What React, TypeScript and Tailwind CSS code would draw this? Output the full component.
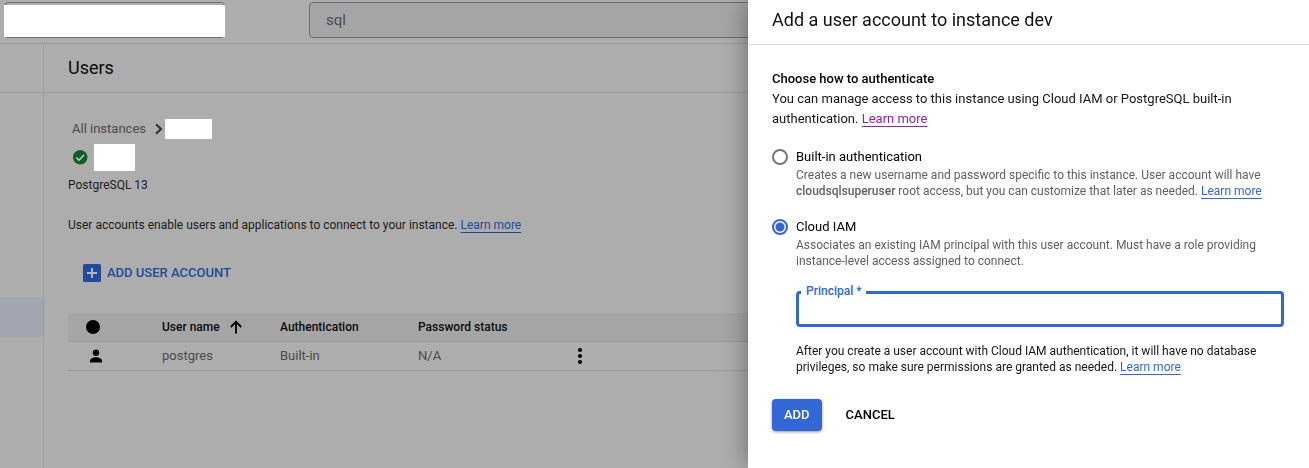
import React from "react";

function LearnMore({ visited = false, dimmed = false }: { visited?: boolean; dimmed?: boolean }) {
  const color = visited ? "text-[#8e24aa]" : dimmed ? "text-[#224a9b]" : "text-[#3367d6]";
  return (
    <a href="#" className={`${color} underline decoration-1 underline-offset-[3px]`}>
      Learn more
    </a>
  );
}

function TopBar() {
  return (
    <header className="flex h-11 items-start border-b border-[#9b9b9b] pl-1">
      <div className="mt-0.5 h-9 w-[221px] rounded border border-[#6f7174] pt-0.5">
        <div className="-mx-px h-8 bg-white" />
      </div>
      <input
        type="text"
        aria-label="Search"
        defaultValue="sql"
        className="mt-0.5 ml-[84px] h-9 grow rounded border border-[#6a6d70] bg-[#a3a5a7] px-4 text-[15px] text-[#4b4d4f] outline-none"
      />
    </header>
  );
}

function UsersTable() {
  return (
    <table className="mt-[30px] w-full table-fixed border-collapse text-left text-[13px]">
      <colgroup>
        <col className="w-[94px]" />
        <col className="w-[118px]" />
        <col className="w-[138px]" />
        <col className="w-[156px]" />
        <col />
      </colgroup>
      <thead className="bg-[#a5a5a5] text-xs text-[#0c0c0c]">
        <tr className="h-7 border-b border-[#989898]">
          <th className="pl-[18px]">
            <svg viewBox="0 0 14 14" className="size-3.5" role="img" aria-label="Type">
              <circle cx="7" cy="7" r="7" fill="#000" />
            </svg>
          </th>
          <th className="font-medium">
            <span className="flex items-center gap-2">
              User name
              <svg viewBox="0 0 16 16" className="size-4" aria-hidden="true">
                <path d="M8 14.500V3M2.800 8 8 2.800 13.200 8" fill="none" stroke="#000" strokeWidth="1.800" />
              </svg>
            </span>
          </th>
          <th className="font-medium">Authentication</th>
          <th className="font-medium">Password status</th>
          <th aria-label="Actions" />
        </tr>
      </thead>
      <tbody className="text-[#4b4b4b]">
        <tr className="h-[29px] border-b border-[#989898]">
          <td className="pl-5">
            <svg viewBox="0 0 16 16" className="size-4" role="img" aria-label="User">
              <circle cx="8" cy="4.700" r="3.200" fill="#000" />
              <path d="M2 14.500v-1.700c0-2.200 3.500-3.500 6-3.500s6 1.300 6 3.500v1.700z" fill="#000" />
            </svg>
          </td>
          <td>postgres</td>
          <td>Built-in</td>
          <td>N/A</td>
          <td>
            <button type="button" aria-label="More actions" className="flex">
              <svg viewBox="0 0 12 18" className="h-[18px] w-3" fill="#000" aria-hidden="true">
                <circle cx="6" cy="3" r="2.100" />
                <circle cx="6" cy="9" r="2.100" />
                <circle cx="6" cy="15" r="2.100" />
              </svg>
            </button>
          </td>
        </tr>
      </tbody>
    </table>
  );
}

function UsersPage() {
  return (
    <div className="flex min-h-screen flex-col bg-[#adadad]">
      <TopBar />
      <div className="flex grow">
        <nav className="flex w-11 shrink-0 flex-col border-r border-[#9b9b9b]">
          <div className="h-[49px] border-b border-[#9b9b9b]" />
          <a href="#" aria-label="Users" aria-current="page" className="mt-51 h-10 bg-[#a2a6b0]" />
        </nav>
        <main className="flex min-w-0 grow flex-col">
          <h1 className="flex h-[49px] items-center border-b border-[#9b9b9b] pl-6 text-lg text-[#0c0c0c]">
            Users
          </h1>
          <div className="flex flex-col pt-[26px] pl-6 text-[#1c1c1c]">
            <div className="flex h-5 items-center pl-1 text-[13px] text-[#4b4b4b]">
              <a href="#">All instances</a>
              <svg viewBox="0 0 8 12" className="mr-0.5 ml-[9px] h-3 w-2" aria-hidden="true">
                <path d="m1 1.200 5 4.800-5 4.800" fill="none" stroke="#333" strokeWidth="2.200" />
              </svg>
              <span className="h-5 w-[47px] bg-white" />
            </div>
            <div className="mt-[5px] flex h-[27px] items-center gap-1.5 pl-[5px]">
              <svg viewBox="0 0 15 15" className="size-[15px]" role="img" aria-label="Running">
                <circle cx="7.200" cy="7.300" r="7.200" fill="#125e26" />
                <path d="m3.300 7.500 2.700 2.700 5-5.200" fill="none" stroke="#c3cfc6" strokeWidth="1.500" />
              </svg>
              <span className="h-full w-[41px] bg-white" />
            </div>
            <p className="mt-1 text-xs leading-5">PostgreSQL 13</p>
            <p className="mt-5 text-xs leading-5">
              User accounts enable users and applications to connect to your instance.{" "}
              <LearnMore dimmed />
            </p>
            <button
              type="button"
              className="mt-7 ml-[15px] flex h-5 items-center gap-1.5 self-start text-[13px] font-medium text-[#224a9b]"
            >
              <svg viewBox="0 0 18 18" className="size-[18px]" aria-hidden="true">
                <rect width="18" height="18" rx="1.500" fill="#224a9b" />
                <path d="M9 4v10M4 9h10" stroke="#b6bac2" strokeWidth="1.800" />
              </svg>
              ADD USER ACCOUNT
            </button>
            <UsersTable />
          </div>
        </main>
      </div>
    </div>
  );
}

const radioClass =
  "mt-0.5 size-4 shrink-0 appearance-none rounded-full border-2 border-[#757575] checked:border-[#3367d6] checked:bg-[radial-gradient(circle,#3367d6_4px,#fff_5px)]";

function AddUserPanel() {
  return (
    <aside
      aria-labelledby="panel-title"
      className="fixed inset-y-0 right-0 w-[561px] overflow-hidden bg-white shadow-[0_0_24px_rgba(0,0,0,0.4)]"
    >
      <h2
        id="panel-title"
        className="flex h-[45px] items-center border-b border-[#e0e0e0] px-6 pb-1 text-lg text-[#111]"
      >
        Add a user account to instance dev
      </h2>
      <form className="flex flex-col px-6 pt-6 text-xs text-[#161616]">
        <h3 className="text-[13px] leading-5 font-medium text-black">Choose how to authenticate</h3>
        <p className="text-[13px] leading-5">
          You can manage access to this instance using Cloud IAM or PostgreSQL built-in
          <br />
          authentication. <LearnMore visited />
        </p>
        <div className="mt-[18px] flex gap-2">
          <input id="builtin" type="radio" name="method" className={radioClass} aria-describedby="builtin-help" />
          <div>
            <label htmlFor="builtin" className="block text-[13px] leading-5 text-black">
              Built-in authentication
            </label>
            <p id="builtin-help" className="leading-4 text-[#616161]">
              Creates a new username and password specific to this instance. User account will have
              <br />
              <b className="font-medium">cloudsqlsuperuser</b> root access, but you can customize that later as needed.{" "}
              <LearnMore />
            </p>
          </div>
        </div>
        <div className="mt-[18px] flex gap-2">
          <input
            id="iam"
            type="radio"
            name="method"
            defaultChecked
            className={radioClass}
            aria-describedby="iam-help"
          />
          <div className="grow">
            <label htmlFor="iam" className="block text-[13px] leading-5 text-black">
              Cloud IAM
            </label>
            <p id="iam-help" className="leading-4 text-[#616161]">
              Associates an existing IAM principal with this user account. Must have a role providing
              <br />
              instance-level access assigned to connect.
            </p>
            <div className="relative mt-[22px] mr-px">
              <label
                htmlFor="principal"
                className="absolute -top-2 left-[5px] bg-white pr-1 pl-[5px] text-xs leading-4 font-medium text-[#3367d6]"
              >
                Principal *
              </label>
              <input
                id="principal"
                type="text"
                required
                className="block h-9 w-full rounded border-3 border-[#3367d6] px-3 outline-none"
              />
            </div>
            <p className="mt-4 leading-4">
              After you create a user account with Cloud IAM authentication, it will have no database
              <br />
              privileges, so make sure permissions are granted as needed. <LearnMore />
            </p>
          </div>
        </div>
        <div className="mt-6 flex gap-3">
          <button
            type="button"
            className="h-8 rounded bg-[#3367d6] px-3 text-[13px] font-medium text-white shadow-[0_1px_3px_rgba(0,0,0,0.4)]"
          >
            ADD
          </button>
          <button type="button" className="h-8 px-3 text-[13px] font-medium text-black">
            CANCEL
          </button>
        </div>
      </form>
    </aside>
  );
}

export default function App() {
  return (
    <div className="font-[Roboto,sans-serif]">
      <UsersPage />
      <AddUserPanel />
    </div>
  );
}
